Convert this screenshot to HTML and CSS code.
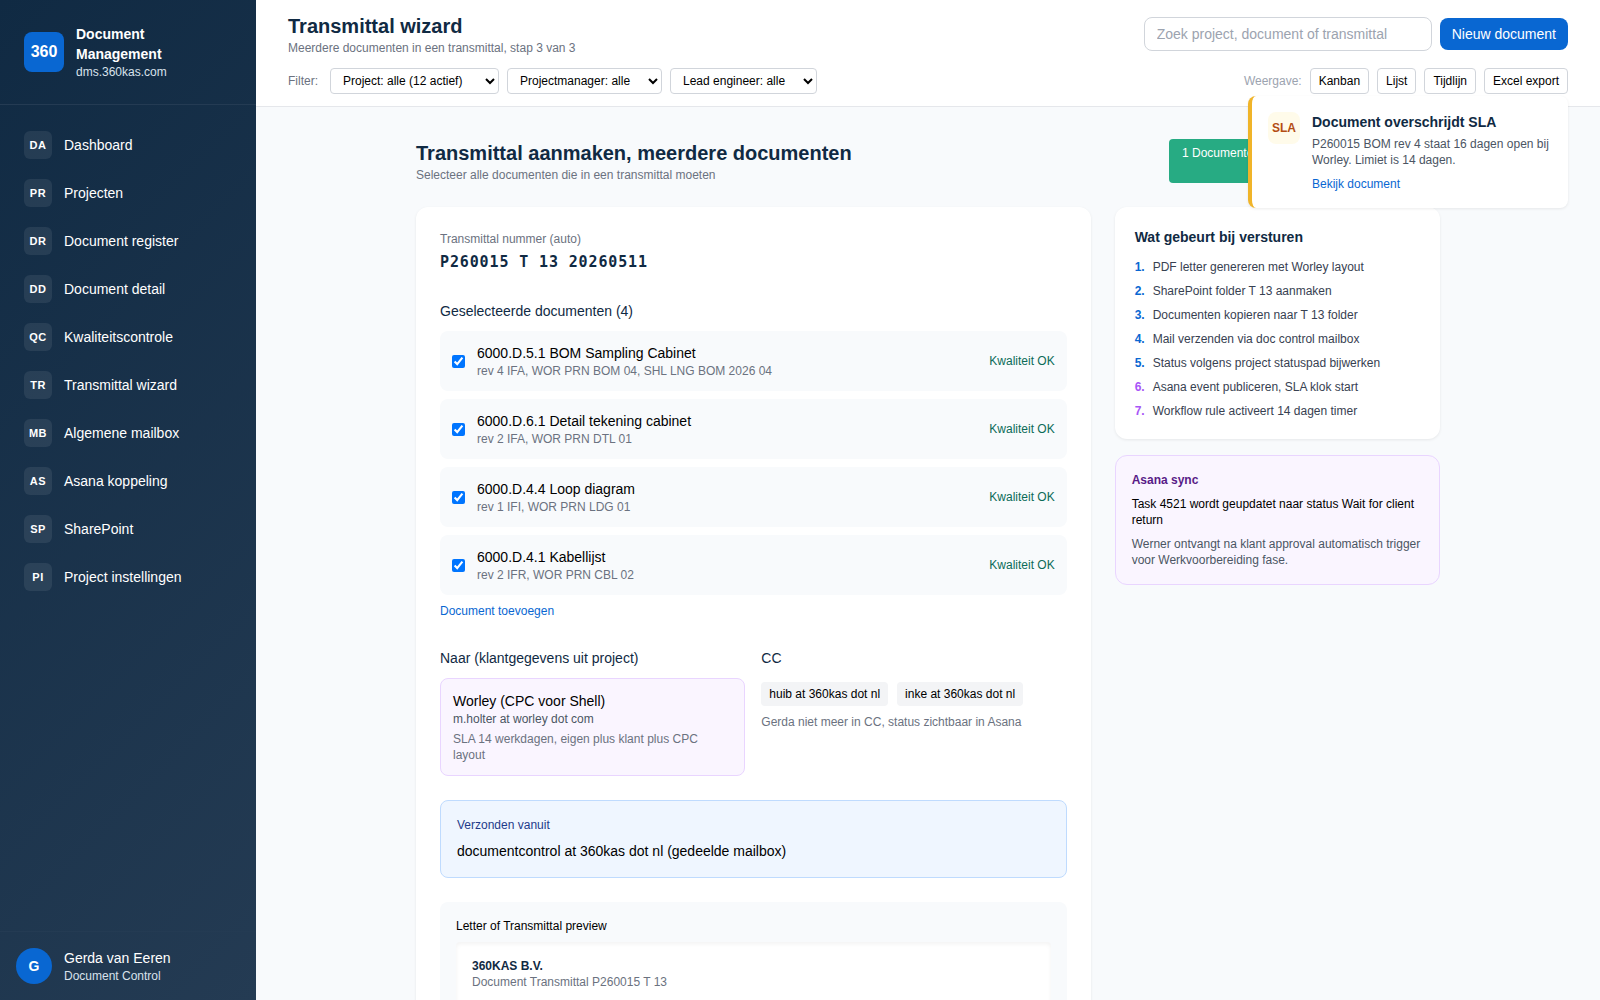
FILE: index.html
```html
<!DOCTYPE html>
<html lang="nl">
<head>
  <meta charset="UTF-8">
  <title>360KAS Document Management</title>
  <link rel="stylesheet" href="styles.css">
</head>
<body>
  <aside class="sidebar">
    <div class="brand">
      <div class="brand-logo">360</div>
      <div>
        <div class="brand-name">Document Management</div>
        <div class="brand-host">dms.360kas.com</div>
      </div>
    </div>
    <nav class="nav">
      <a class="nav-item"><span class="nav-icon">DA</span>Dashboard</a>
      <a class="nav-item"><span class="nav-icon">PR</span>Projecten</a>
      <a class="nav-item"><span class="nav-icon">DR</span>Document register</a>
      <a class="nav-item"><span class="nav-icon">DD</span>Document detail</a>
      <a class="nav-item"><span class="nav-icon">QC</span>Kwaliteitscontrole</a>
      <a class="nav-item"><span class="nav-icon">TR</span>Transmittal wizard</a>
      <a class="nav-item"><span class="nav-icon">MB</span>Algemene mailbox</a>
      <a class="nav-item"><span class="nav-icon">AS</span>Asana koppeling</a>
      <a class="nav-item"><span class="nav-icon">SP</span>SharePoint</a>
      <a class="nav-item"><span class="nav-icon">PI</span>Project instellingen</a>
    </nav>
    <div class="user">
      <div class="avatar">G</div>
      <div>
        <div class="user-name">Gerda van Eeren</div>
        <div class="user-role">Document Control</div>
      </div>
    </div>
  </aside>

  <main class="main">
    <header class="topbar">
      <div class="topbar-row">
        <div>
          <h1>Transmittal wizard</h1>
          <p class="subtitle">Meerdere documenten in een transmittal, stap 3 van 3</p>
        </div>
        <div class="actions">
          <input class="search" type="text" placeholder="Zoek project, document of transmittal">
          <button class="btn-primary">Nieuw document</button>
        </div>
      </div>
      <div class="topbar-row filters">
        <div class="filter-group">
          <span class="filter-label">Filter:</span>
          <select class="filter-project"><option>Project: alle (12 actief)</option></select>
          <select class="filter-manager"><option>Projectmanager: alle</option></select>
          <select class="filter-engineer"><option>Lead engineer: alle</option></select>
        </div>
        <div class="view-group">
          <span class="view-label">Weergave:</span>
          <button class="btn-view">Kanban</button>
          <button class="btn-view">Lijst</button>
          <button class="btn-view">Tijdlijn</button>
          <button class="btn-view">Excel export</button>
        </div>
      </div>
    </header>

    <div class="page">
      <div class="page-head">
        <div>
          <h2>Transmittal aanmaken, meerdere documenten</h2>
          <p class="subtitle">Selecteer alle documenten die in een transmittal moeten</p>
        </div>
        <div class="steps">1 Documenten</div>
      </div>

      <div class="columns">
        <section class="card wizard">
          <div class="label">Transmittal nummer (auto)</div>
          <div class="number">P260015 T 13 20260511</div>

          <h3>Geselecteerde documenten (4)</h3>
          <div class="docs">
            <label class="doc">
              <input type="checkbox" checked>
              <span class="doc-text">
                <span class="doc-title">6000.D.5.1 BOM Sampling Cabinet</span>
                <span class="doc-meta">rev 4 IFA, WOR PRN BOM 04, SHL LNG BOM 2026 04</span>
              </span>
              <span class="doc-ok">Kwaliteit OK</span>
            </label>
            <label class="doc">
              <input type="checkbox" checked>
              <span class="doc-text">
                <span class="doc-title">6000.D.6.1 Detail tekening cabinet</span>
                <span class="doc-meta">rev 2 IFA, WOR PRN DTL 01</span>
              </span>
              <span class="doc-ok">Kwaliteit OK</span>
            </label>
            <label class="doc">
              <input type="checkbox" checked>
              <span class="doc-text">
                <span class="doc-title">6000.D.4.4 Loop diagram</span>
                <span class="doc-meta">rev 1 IFI, WOR PRN LDG 01</span>
              </span>
              <span class="doc-ok">Kwaliteit OK</span>
            </label>
            <label class="doc">
              <input type="checkbox" checked>
              <span class="doc-text">
                <span class="doc-title">6000.D.4.1 Kabellijst</span>
                <span class="doc-meta">rev 2 IFR, WOR PRN CBL 02</span>
              </span>
              <span class="doc-ok">Kwaliteit OK</span>
            </label>
          </div>
          <a class="link">Document toevoegen</a>

          <div class="recipients">
            <div>
              <h3>Naar (klantgegevens uit project)</h3>
              <div class="client">
                <div class="client-name">Worley (CPC voor Shell)</div>
                <div class="client-mail">m.holter at worley dot com</div>
                <div class="client-note">SLA 14 werkdagen, eigen plus klant plus CPC layout</div>
              </div>
            </div>
            <div>
              <h3>CC</h3>
              <div class="tags">
                <span class="tag">huib at 360kas dot nl</span>
                <span class="tag">inke at 360kas dot nl</span>
              </div>
              <div class="cc-note">Gerda niet meer in CC, status zichtbaar in Asana</div>
            </div>
          </div>

          <div class="sender">
            <div class="sender-label">Verzonden vanuit</div>
            <div class="sender-mail">documentcontrol at 360kas dot nl (gedeelde mailbox)</div>
          </div>

          <div class="preview">
            <div class="preview-label">Letter of Transmittal preview</div>
            <div class="letter">
              <div class="letter-from">360KAS B.V.</div>
              <div class="letter-ref">Document Transmittal P260015 T 13</div>
            </div>
          </div>
        </section>

        <aside class="side">
          <section class="card events">
            <h4>Wat gebeurt bij versturen</h4>
            <ol class="event-list">
              <li><b>1.</b>PDF letter genereren met Worley layout</li>
              <li><b>2.</b>SharePoint folder T 13 aanmaken</li>
              <li><b>3.</b>Documenten kopieren naar T 13 folder</li>
              <li><b>4.</b>Mail verzenden via doc control mailbox</li>
              <li><b>5.</b>Status volgens project statuspad bijwerken</li>
              <li class="asana-step"><b>6.</b>Asana event publiceren, SLA klok start</li>
              <li class="asana-step"><b>7.</b>Workflow rule activeert 14 dagen timer</li>
            </ol>
          </section>
          <section class="asana">
            <h5>Asana sync</h5>
            <p>Task 4521 wordt geupdatet naar status Wait for client return</p>
            <p class="asana-note">Werner ontvangt na klant approval automatisch trigger voor Werkvoorbereiding fase.</p>
          </section>
        </aside>
      </div>
    </div>
  </main>

  <div class="toast">
    <div class="toast-icon">SLA</div>
    <div>
      <div class="toast-title">Document overschrijdt SLA</div>
      <div class="toast-text">P260015 BOM rev 4 staat 16 dagen open bij Worley. Limiet is 14 dagen.</div>
      <a class="link">Bekijk document</a>
    </div>
  </div>
</body>
</html>
```
FILE: styles.css
```css
* {
  box-sizing: border-box;
}
body {
  margin: 0;
  display: flex;
  height: 100vh;
  overflow: hidden;
  font-family: "Liberation Sans", Arial, sans-serif;
  font-size: 14px;
  line-height: 20px;
  color: #000;
  background: #f8fafc;
}
h1, h2, h3, h4, h5, p, ol {
  margin: 0;
  padding: 0;
}
h1, h2 {
  font-size: 20px;
  line-height: 28px;
  color: #102a43;
}
h3 {
  font-size: 14px;
  font-weight: 400;
  margin-bottom: 10px;
  color: #102a43;
}
input, select, button {
  font-family: inherit;
}

/* Sidebar */
.sidebar {
  width: 256px;
  flex-shrink: 0;
  display: flex;
  flex-direction: column;
  color: white;
  background: linear-gradient(135deg, #102a43 0%, #243b53 100%);
}
.brand {
  display: flex;
  align-items: center;
  gap: 12px;
  padding: 24px;
  border-bottom: 1px solid #243b53;
}
.brand-logo {
  width: 40px;
  height: 40px;
  flex-shrink: 0;
  display: flex;
  align-items: center;
  justify-content: center;
  border-radius: 8px;
  background: #0967d2;
  font-size: 16px;
  font-weight: 700;
}
.brand-name {
  width: 100px;
  font-weight: 700;
}
.brand-host, .user-role {
  font-size: 12px;
  line-height: 16px;
  color: #d9e2ec;
}
.nav {
  flex: 1;
  padding: 16px 12px;
}
.nav-item {
  display: flex;
  align-items: center;
  gap: 12px;
  padding: 10px 12px;
}
.nav-icon {
  width: 28px;
  height: 28px;
  display: flex;
  align-items: center;
  justify-content: center;
  border-radius: 6px;
  background: rgba(255, 255, 255, 0.08);
  font-size: 11px;
  font-weight: 700;
  letter-spacing: 0.5px;
}
.user {
  display: flex;
  align-items: center;
  gap: 12px;
  padding: 16px;
  border-top: 1px solid #243b53;
}
.avatar {
  width: 36px;
  height: 36px;
  display: flex;
  align-items: center;
  justify-content: center;
  border-radius: 50%;
  background: #0967d2;
  font-weight: 700;
}

/* Topbar */
.main {
  flex: 1;
  min-width: 0;
}
.topbar {
  padding: 12px 32px;
  background: white;
  border-bottom: 1px solid #e5e7eb;
}
.topbar-row {
  display: flex;
  align-items: center;
  justify-content: space-between;
}
.subtitle {
  font-size: 12px;
  line-height: 16px;
  color: #6b7280;
}
.actions, .filter-group, .view-group {
  display: flex;
  align-items: center;
  gap: 8px;
}
.search {
  width: 288px;
  padding: 8px 12px;
  border: 1px solid #d1d5db;
  border-radius: 8px;
  font-size: 14px;
  line-height: 16px;
}
.search::placeholder {
  color: #9ca3af;
}
.btn-primary {
  padding: 6px 12px;
  border: none;
  border-radius: 8px;
  background: #0967d2;
  color: white;
  font-size: 14px;
  line-height: 20px;
}
.filters {
  margin-top: 12px;
  font-size: 12px;
  line-height: 16px;
}
.filter-label {
  margin-right: 4px;
  color: #6b7280;
}
.view-label {
  color: #9ca3af;
}
select, .btn-view {
  height: 26px;
  padding: 4px 8px;
  border: 1px solid #d1d5db;
  border-radius: 4px;
  background: white;
  color: #000;
  font-size: 12px;
  line-height: 16px;
}
.filter-project {
  width: 169px;
}
.filter-manager {
  width: 155px;
}
.filter-engineer {
  width: 147px;
}

/* Page */
.page {
  max-width: 1024px;
  margin: 32px auto;
}
.page-head {
  display: flex;
  justify-content: space-between;
  margin-bottom: 24px;
}
.steps {
  width: 271px;
  padding: 6px 13px;
  border-radius: 4px;
  background: #27ab83;
  color: white;
  font-size: 12px;
  line-height: 16px;
}
.columns {
  display: grid;
  grid-template-columns: repeat(3, 1fr);
  gap: 24px;
  align-items: start;
}
.card {
  border-radius: 12px;
  background: white;
  box-shadow: 0 1px 3px rgba(0, 0, 0, 0.08);
}
.wizard {
  grid-column: span 2;
  padding: 24px;
}
.label {
  font-size: 12px;
  line-height: 16px;
  color: #6b7280;
}
.number {
  margin: 1px 0 25px;
  font-family: Consolas, "DejaVu Sans Mono", monospace;
  font-size: 15px;
  line-height: 28px;
  font-weight: 700;
  letter-spacing: 0.87px;
  color: #102a43;
}
.docs {
  display: flex;
  flex-direction: column;
  gap: 8px;
}
.doc {
  display: flex;
  align-items: center;
  gap: 12px;
  padding: 12px;
  border-radius: 8px;
  background: #f8fafc;
}
.doc input {
  margin: 0;
}
.doc-text {
  flex: 1;
}
.doc-title {
  display: block;
}
.doc-meta {
  display: block;
  font-size: 12px;
  line-height: 16px;
  color: #6b7280;
}
.doc-ok {
  font-size: 12px;
  line-height: 16px;
  color: #0c6b58;
}
.link {
  display: block;
  margin-top: 8px;
  font-size: 12px;
  line-height: 16px;
  color: #0967d2;
}
.recipients {
  display: grid;
  grid-template-columns: 1fr 1fr;
  gap: 16px;
  margin: 29px 0 24px;
}
.client {
  padding: 12px;
  border: 1px solid #e9d5ff;
  border-radius: 8px;
  background: #faf5ff;
}
.client-mail {
  font-size: 12px;
  line-height: 16px;
  color: #4b5563;
}
.client-note {
  margin-top: 4px;
  font-size: 12px;
  line-height: 16px;
  color: #6b7280;
}
.tags {
  display: flex;
  gap: 9px;
  padding: 4px 0 8px;
}
.tag {
  padding: 4px 8px;
  border-radius: 4px;
  background: #f3f4f6;
  font-size: 12px;
  line-height: 16px;
}
.cc-note {
  font-size: 12px;
  line-height: 16px;
  color: #6b7280;
}
.sender {
  margin-bottom: 24px;
  padding: 16px;
  border: 1px solid #bfdbfe;
  border-radius: 8px;
  background: #eff6ff;
}
.sender-label {
  margin-bottom: 8px;
  font-size: 12px;
  line-height: 16px;
  color: #1e3a8a;
}
.preview {
  padding: 16px;
  border-radius: 8px;
  background: #f8fafc;
  font-size: 12px;
  line-height: 16px;
}
.preview-label {
  margin-bottom: 8px;
}
.letter {
  height: 240px;
  padding: 16px;
  border-radius: 4px;
  background: white;
  box-shadow: inset 0 2px 4px rgba(0, 0, 0, 0.05);
}
.letter-from {
  font-weight: 700;
  color: #102a43;
}
.letter-ref {
  color: #6b7280;
}

/* Right column */
.side {
  display: flex;
  flex-direction: column;
  gap: 16px;
}
.events {
  padding: 20px;
}
.events h4 {
  margin-bottom: 12px;
  font-size: 14px;
  color: #102a43;
}
.event-list {
  display: flex;
  flex-direction: column;
  gap: 8px;
  list-style: none;
  font-size: 12px;
  line-height: 16px;
  color: #374151;
}
.event-list li {
  display: flex;
  gap: 8px;
}
.event-list b {
  color: #0967d2;
}
.event-list .asana-step b {
  color: #a855f7;
}
.asana {
  padding: 16px;
  border: 1px solid #e9d5ff;
  border-radius: 12px;
  background: #faf5ff;
  font-size: 12px;
  line-height: 16px;
}
.asana h5 {
  margin-bottom: 8px;
  font-size: 12px;
  color: #581c87;
}
.asana-note {
  margin-top: 8px;
  color: #4b5563;
}

/* SLA melding */
.toast {
  position: absolute;
  top: 96px;
  right: 32px;
  width: 320px;
  display: flex;
  align-items: flex-start;
  gap: 12px;
  padding: 16px;
  border-left: 4px solid #f0b429;
  border-radius: 8px;
  background: white;
  box-shadow: 0 1px 3px rgba(0, 0, 0, 0.08);
}
.toast-icon {
  width: 32px;
  height: 32px;
  flex-shrink: 0;
  display: flex;
  align-items: center;
  justify-content: center;
  border-radius: 8px;
  background: #fffbea;
  font-size: 12px;
  font-weight: 700;
  color: #b44d12;
}
.toast-title {
  margin-bottom: 4px;
  font-weight: 700;
  color: #102a43;
}
.toast-text {
  font-size: 12px;
  line-height: 16px;
  color: #4b5563;
}
```
